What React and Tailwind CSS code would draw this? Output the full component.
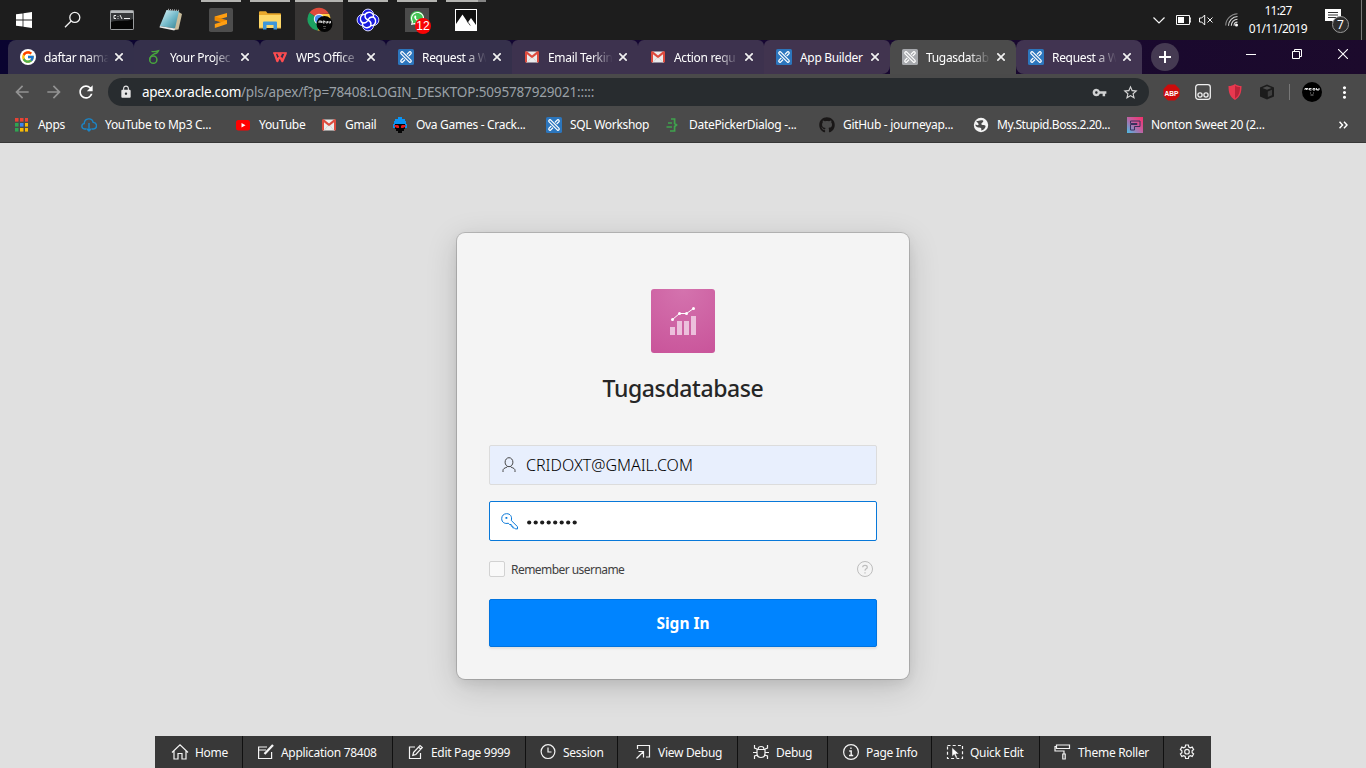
import React from "react";
import { FcGoogle } from "react-icons/fc";
import { FaGithub, FaWhatsapp } from "react-icons/fa";
import {
  MdArrowBack, MdArrowForward, MdRefresh, MdLock, MdStarBorder, MdMoreVert, MdVpnKey,
} from "react-icons/md";

/* ---------- small icons ---------- */

const Apex = ({ gray }) => (
  <svg width="16" height="16" viewBox="0 0 16 16" fill="none">
    <rect width="16" height="16" rx="1.6" fill={gray ? "#a7a9ad" : "#2c76bd"} />
    <path d="M4.6 2.9 13.1 11.4M2.9 4.6 11.4 13.1M4.6 2.9C3.4 2.4 2.4 3.4 2.9 4.6M13.1 11.4c.5 1.2-.5 2.2-1.7 1.7M11.4 2.9 9.3 5M13.1 4.6 11 6.7M11.4 2.9c1.2-.5 2.2.5 1.7 1.7M2.9 11.4 5 9.3M4.6 13.1 6.7 11M2.9 11.4c-.5 1.2.5 2.2 1.7 1.7" stroke="#fff" strokeWidth="1.25" strokeLinecap="round" />
  </svg>
);

const Gmail = () => (
  <svg width="16" height="16" viewBox="0 0 16 16">
    <path d="M2 2.500h12v11H2z" fill="#ececec" />
    <path d="M1 3.300C1 2.600 1.500 2.300 2 2.300h.8L8 6.600l5.200-4.300h.8c.6 0 1 .3 1 1v9.400c0 .5-.3.8-.8.8H13V5.200L8 9.300 3 5.200v8.300H1.800c-.5 0-.8-.3-.8-.8z" fill="#dd4b3e" />
    <path d="m3 13.500 4-4.800M13 13.500 9 8.700" stroke="#cfcfcf" strokeWidth=".7" />
  </svg>
);

const Overleaf = () => (
  <svg width="16" height="16" viewBox="0 0 16 16" fill="none" stroke="#49a63e" strokeWidth="1.500">
    <circle cx="7.300" cy="10.700" r="3.600" />
    <path d="M3.700 10.700C3.700 7.500 5.500 6 8.500 4.800M5.500 2.300c2 .6 4 .4 7-.6-.8 2.200-2.200 2.800-4.600 3.200" strokeWidth="1.300" />
  </svg>
);

const Wps = () => (
  <svg width="16" height="16" viewBox="0 0 16 16" fill="none" stroke="#ff4d50" strokeWidth="2.200">
    <path d="M1.200 4h13.600" strokeWidth="1.600" />
    <path d="m2.500 4.200 2.800 8L9 4.500M6.300 4.200l4 8 3.500-8" strokeLinejoin="round" />
  </svg>
);

const Plus = () => (
  <svg width="14" height="14" viewBox="0 0 14 14" stroke="#fff" strokeWidth="2"><path d="M7 1v12M1 7h12" /></svg>
);

const Cross = () => (
  <svg width="8" height="8" viewBox="0 0 8 8" stroke="#f1f1f1" strokeWidth="1.700"><path d="m.3.3 7.400 7.400M7.700.3.300 7.700" /></svg>
);

/* ---------- taskbar ---------- */

const WinLogo = () => (
  <svg width="16" height="16" viewBox="0 0 16 16" fill="#fff">
    <path d="M0 2.300 6.600 1.400v6.200H0zM7.400 1.300 16 0v7.600H7.400zM0 8.400h6.600v6.200L0 13.700zM7.400 8.400H16V16l-8.600-1.200z" />
  </svg>
);
const Search = () => (
  <svg width="18" height="18" viewBox="0 0 18 18" fill="none" stroke="#f2f2f2" strokeWidth="1.300">
    <circle cx="10.800" cy="6.400" r="5" /><path d="m7.200 10-6.200 6.300" />
  </svg>
);
const Cmd = () => (
  <svg width="24" height="20" viewBox="0 0 24 20">
    <rect x=".5" y=".5" width="23" height="19" rx=".6" fill="#060606" stroke="#9a9d9f" />
    <path d="M1 1h22v2H1z" fill="#b9bcbe" />
    <path d="M1 3h22v6C16 12 8 9.500 1 12z" fill="#36383a" />
    <path d="M6 5.500H4v3h2M8 6v.8M8 8v.8M10 5l2 4M14 8.500h6" stroke="#eee" strokeWidth="1" fill="none" />
  </svg>
);
const Notepad = () => (
  <svg width="24" height="24" viewBox="0 0 24 24">
    <defs><linearGradient id="np" x1="0" y1="0" x2="1" y2="1"><stop stopColor="#e4f7fb" /><stop offset=".55" stopColor="#72b9c9" /><stop offset="1" stopColor="#35808f" /></linearGradient></defs>
    <path d="m18 3 5 3-3.500 15.500L15 22z" fill="#c9bd9c" />
    <path d="M7.500 2 20 3l-4 17.500L.8 18z" fill="url(#np)" />
    <path d="m.8 18 15.200 2.500-.6 2L.6 19.500z" fill="#e8ecec" />
    <path d="M9 1.500 21 2.700" stroke="#aaa" strokeDasharray="1 1" strokeWidth="1.500" />
  </svg>
);
const Sublime = () => (
  <svg width="24" height="24" viewBox="0 0 24 24">
    <rect width="24" height="24" rx="1.800" fill="#4d4d4d" />
    <path d="M5.800 8.600 18 4.900v4L5.800 12.600z" fill="#ff9f12" />
    <path d="m5.800 8.600 12.200 3.700v3.800L5.800 12.500z" fill="#f08a00" />
    <path d="M5.800 16.100 18 12.300v3.800L5.800 20z" fill="#ff9f12" />
  </svg>
);
const Explorer = () => (
  <svg width="22" height="19" viewBox="0 0 22 19">
    <path d="M0 1.200Q0 .2 1 .2h6l1.500 2H21q1 0 1 1V17H0z" fill="#e9a92c" />
    <path d="M0 4h22v13H0z" fill="#fdd868" />
    <path d="M4 18.500v-7q0-1 1-1h12q1 0 1 1v7h-3.500V14h-7v4.500z" fill="#3e97d9" />
    <path d="M0 16.500h4v1H0zM18 16.500h4v1h-4z" fill="#e3b045" />
  </svg>
);
const Chrome = () => (
  <svg width="26" height="26" viewBox="0 0 26 26">
    <path d="M12 12 2.400 5.700A11.500 11.500 0 0 1 22 6.800L12 7z" fill="#de4b3c" />
    <path d="M12 12 2.400 5.700A11.500 11.500 0 0 0 10.500 23.500L15 15z" fill="#1ca261" />
    <path d="M12 7h10.200A11.500 11.500 0 0 1 10.500 23.500l5-9z" fill="#fecd42" />
    <circle cx="12" cy="12" r="5.200" fill="#f1f1f1" /><circle cx="12" cy="12" r="4.100" fill="#4a8bf4" />
    <circle cx="17.500" cy="17" r="8" fill="#050505" />
    <path d="M12 16v-2h2.500v2M13.200 14v2M16 15h1.500v-1H16v2h1.500M19 14v2h1.500v-2M22 14v2h1.500v-2" stroke="#ddd" strokeWidth=".9" fill="none" />
    <path d="M16 19.500h3M16.500 21.500h2" stroke="#666" strokeWidth=".8" />
  </svg>
);
const Knot = () => (
  <svg width="24" height="24" viewBox="0 0 24 24">
    <g fill="#1a1be0" stroke="#d9dcff" strokeWidth="1">
      <circle cx="12" cy="6.700" r="5.600" /><circle cx="17.300" cy="12" r="5.600" /><circle cx="12" cy="17.300" r="5.600" /><circle cx="6.700" cy="12" r="5.600" />
    </g>
    <circle cx="12" cy="12" r="7.500" fill="#1a1be0" />
    <path d="M12 12C8 10 8 5.500 12 4.500s6 2.500 5.500 4.500M12 12c2-4 6.500-4 7.500 0s-2.500 6-4.500 5.500M12 12c4 2 4 6.500 0 7.500S6 17 6.500 15M12 12c-2 4-6.500 4-7.500 0S7 6 9 6.500" fill="none" stroke="#fff" strokeWidth="1.400" />
  </svg>
);
const Photo = () => (
  <svg width="22" height="22" viewBox="0 0 22 22">
    <rect x=".5" y=".5" width="21" height="21" fill="#101010" stroke="#fff" />
    <path d="M1 15 7.500 5.500l5.300 8L16 9l5 7v5H1z" fill="#fff" />
    <path d="m12 12 3.300 4.500" stroke="#222" strokeWidth=".8" />
  </svg>
);
const WhatsApp = () => (
  <div className="relative flex size-6 items-center justify-center bg-[#4b4b4b]">
    <div className="mb-1 flex size-[14px] items-center justify-center rounded-full bg-[#43c553]">
      <FaWhatsapp className="size-[15px] shrink-0 text-white" />
    </div>
    <span className="absolute left-[10px] top-[10px] flex size-4 items-center justify-center rounded-full bg-[#f80404] font-['Liberation_Sans'] text-[12px] leading-none text-white">12</span>
  </div>
);

const slots = [
  { icon: <WinLogo /> }, { icon: <Search /> }, { icon: <Cmd /> }, { icon: <Notepad /> },
  { icon: <Sublime />, bar: "w-10 mr-1" }, { icon: <Explorer />, bar: "w-10 mr-1" },
  { icon: <Chrome />, bar: "w-12", active: true },
  { icon: <Knot />, bar: "w-10 mr-1" }, { icon: <WhatsApp />, bar: "w-10 mr-1" },
  { icon: <Photo />, bar: "w-10 mr-1 border-r-8 border-[#858585]" },
];

function Taskbar() {
  return (
    <div className="flex h-10 bg-[#1d1d1d]">
      {slots.map((s, i) => (
        <div key={i} className="flex h-10 w-[49px] flex-col items-end">
          <div className={`h-0.5 shrink-0 ${s.bar ? `bg-[#b4b4b1] ${s.bar}` : "w-10"}`} />
          <div className={`flex h-[38px] w-12 items-center justify-center pb-0.5 ${s.active ? "bg-[#373534] pl-[2px]" : i < 4 ? "pr-[2px]" : ""}`}>{s.icon}</div>
        </div>
      ))}
      <div className="ml-auto flex items-center text-white">
        <svg width="12" height="7" viewBox="0 0 12 7" fill="none" stroke="#f5f5f5" strokeWidth="1.200"><path d="m.5.5 5.500 5.500 5.500-5.500" /></svg>
        <svg className="ml-[11px]" width="15" height="10" viewBox="0 0 15 10"><path d="M.5.5h13v9H.5zM14 3h1v4h-1z" fill="none" stroke="#f5f5f5" /><path d="M2 2h6v6H2z" fill="#fff" /></svg>
        <svg className="ml-2" width="14" height="12" viewBox="0 0 14 12" fill="none" stroke="#f5f5f5"><path d="M.5 4v4h2.200l3 3V1l-3 3zM8.500 3.500l5 5M13.500 3.500l-5 5" /></svg>
        <svg className="ml-3" width="14" height="14" viewBox="0 0 14 14" fill="none" stroke="#d5d5d5" strokeWidth="1.100">
          <path d="M.7 12.500C.7 6 6 1 12.500.7" stroke="#8a8a8a" /><path d="M3.500 12.800c0-5 4-9.300 9-9.300M6.300 12.800c0-3.500 2.700-6.500 6.200-6.500M9 12.800c0-2 1.500-3.700 3.500-3.700" /><circle cx="11.500" cy="12" r="1.500" fill="#fff" stroke="none" />
        </svg>
        <div className="ml-2 flex w-[62px] flex-col items-center text-[12px] leading-[18px]">
          <span className="tracking-[-0.700px]">11:27</span>
          <span className="tracking-[-0.550px]">01/11/2019</span>
        </div>
        <div className="relative ml-4 h-[22px] w-6">
          <svg width="16" height="16" viewBox="0 0 16 16"><path d="M0 0h16v12h-5v4l-4-4H0z" fill="#fff" /><path d="M3 3.500h10M3 6h10M3 8.500h8" stroke="#333" /></svg>
          <span className="absolute left-[7px] top-[7px] flex size-[17px] items-center justify-center rounded-full border border-[#999] bg-[#2d2d2d] text-[12px] leading-none">7</span>
        </div>
        <div className="ml-[12px] mr-1 h-10 w-px bg-[#777]" />
      </div>
    </div>
  );
}

/* ---------- browser ---------- */

const tabs = [
  { icon: <FcGoogle className="size-4 rounded-full bg-white p-px" />, label: "daftar nama" },
  { icon: <Overleaf />, label: "Your Projec" },
  { icon: <Wps />, label: "WPS Office" },
  { icon: <Apex />, label: "Request a W" },
  { icon: <Gmail />, label: "Email Terkin" },
  { icon: <Gmail />, label: "Action requ" },
  { icon: <Apex />, label: "App Builder" },
  { icon: <Apex gray />, label: "Tugasdatab", active: true },
  { icon: <Apex />, label: "Request a W" },
];

function TabStrip() {
  return (
    <div className="flex h-[34px] bg-linear-to-r from-[#0a0430] via-[#150632] to-[#1c0a2c] pl-2">
      {tabs.map((t, i) => (
        <div
          key={i}
          className={`relative flex h-[34px] w-[126px] items-center pl-3 ${
            t.active ? "rounded-t-lg bg-[#4b4b4b]"
              : i === 0 ? "rounded-t-lg bg-[#34304b]"
              : i < 4 ? "rounded-t-md bg-[#35304b]"
              : i === 6 ? "rounded-t-md rounded-br-lg bg-[#41344f]"
              : i === 8 ? "rounded-t-lg rounded-bl-lg bg-[#413451]"
              : "rounded-t-md bg-[#3d324e]"
          }`}
        >
          {t.icon}
          <span className={`ml-2 w-[66px] overflow-hidden whitespace-nowrap pt-px text-[12px] tracking-[-0.320px] text-white ${i === 6 ? "" : "mask-r-from-65% mask-r-to-98%"}`}>{t.label}</span>
          <span className="ml-[5px]"><Cross /></span>
          {i < 6 && <span className="absolute right-[-1px] top-[7px] h-5 w-px bg-[#8b8699]" />}
        </div>
      ))}
      <div className="ml-[9px] mt-[3px] flex size-7 items-center justify-center rounded-full bg-[#453a52]"><Plus /></div>
      <div className="ml-auto mr-[18px] mt-2 flex h-3 items-center gap-[36px]">
        <svg width="10" height="10" viewBox="0 0 10 10" stroke="#fff"><path d="M0 5.500h10" /></svg>
        <svg width="10" height="10" viewBox="0 0 10 10" fill="none" stroke="#fff"><path d="M.5 2.500h7v7h-7zM2.500 2V.5h7v7H8" /></svg>
        <svg width="10" height="10" viewBox="0 0 10 10" stroke="#fff" strokeWidth="1.100"><path d="m0 0 10 10M10 0 0 10" /></svg>
      </div>
    </div>
  );
}

function AddressBar() {
  return (
    <div className="flex h-9 items-center pl-3">
      <MdArrowBack className="size-5 text-[#929292]" />
      <MdArrowForward className="ml-3 size-5 text-[#929292]" />
      <MdRefresh className="ml-[12px] size-5 text-white" />
      <div className="ml-[12px] flex h-7 w-[1041px] items-center rounded-full bg-[#282c2f] pl-[11px] pr-[10px]">
        <MdLock className="size-[14px] text-[#e6e6e6]" />
        <span className="ml-[9px] whitespace-nowrap pt-px text-[13.500px] tracking-[-0.160px] text-[#9aa0a6]"><span className="tracking-[-0.300px] text-white">apex.oracle.com</span>/pls/apex/f?p=78408:LOGIN_DESKTOP:5095787929021:::::</span>
        <MdVpnKey className="ml-auto size-[15px] text-[#d0d1d2]" />
        <MdStarBorder className="ml-[15px] size-[17px] text-[#d5d5d5]" />
      </div>
      <svg className="ml-[14px] overflow-visible" width="17" height="17" viewBox="0 0 17 17">
        <path d="M5 .5h7L16.500 5v7L12 16.500H5L.5 12V5z" fill="#cd0b0b" />
        <text x="8.500" y="11.500" fill="#fff" fontFamily="Liberation Sans" fontWeight="bold" fontSize="8" textAnchor="middle" textLength="14" lengthAdjust="spacingAndGlyphs">ABP</text>
      </svg>
      <svg className="ml-[15px]" width="16" height="16" viewBox="0 0 16 16" fill="none" stroke="#eee" strokeWidth="1.300">
        <rect x=".7" y=".7" width="14.600" height="14.600" rx="2.500" /><circle cx="5" cy="11" r="2.100" /><circle cx="11" cy="11" r="2.100" />
      </svg>
      <svg className="ml-[17px]" width="14" height="16" viewBox="0 0 14 16">
        <path d="M7 0c2 1.500 4 2 6.500 2 0 7-1.500 11-6.500 14C2 13 .5 9 .5 2 3 2 5 1.500 7 0z" fill="#e8384f" /><path d="M7 1.500c1.500 1 3 1.500 5 1.600-.1 5.500-1.300 9-5 11.400z" fill="#b92338" />
      </svg>
      <svg className="ml-[17px]" width="16" height="16" viewBox="0 0 16 16">
        <path d="m8 .5 7 3v9l-7 3-7-3v-9z" fill="#1c1c1c" /><path d="M8 2.200 12.500 4 8 5.800 3.500 4z" fill="#4c4c4c" /><path d="M8.800 7.500 13 5.800v5.400l-4.200 1.900z" fill="#3f3f3f" />
      </svg>
      <div className="ml-[14px] h-4 w-px bg-[#777]" />
      <div className="ml-3 flex size-5 flex-col items-center rounded-full bg-black pt-[4px]">
        <svg width="16" height="10" viewBox="0 0 16 10" fill="none" stroke="#ddd" strokeWidth="1"><path d="M1 4V2.500h3V4M2.500 2.500V4M5.500 2.500h2M5.500 4h2M5.500 2v2M9 2.500h2V4H9zM12.500 2v2H15V2M13.700 3v1" /><path d="M6 7h1M9 7h1M6.500 9h3" stroke="#888" /></svg>
      </div>
      <MdMoreVert className="ml-[13px] size-[19px] text-white" />
    </div>
  );
}

const AppsGrid = () => (
  <svg width="14" height="14" viewBox="0 0 14 14">
    {["#e94335", "#e94335", "#e94335", "#2fa552", "#3e86f3", "#f9bb06", "#2fa552", "#f9bb06", "#f9bb06"].map((c, i) => (
      <rect key={i} x={1 + (i % 3) * 5} y={Math.floor(i / 3) * 5} width="3.500" height="3.600" fill={c} />
    ))}
  </svg>
);
const CloudDown = () => (
  <svg width="16" height="16" viewBox="0 0 16 16" fill="none" stroke="#1b86c8" strokeWidth="1.400">
    <path d="M5 12H3.600C-.1 11.500.1 7 3.200 6.600 3.500.8 11 .2 12.200 5.400c4.400.4 4.400 6.200.4 6.600H11M8 6v8M5.500 11.500 8 14l2.500-2.500" />
  </svg>
);
const YouTube = () => (
  <svg width="16" height="16" viewBox="0 0 16 16"><rect x="1" y="3" width="14" height="10.500" rx="2.500" fill="#f00" /><path d="m6.500 6 4 2.200-4 2.200z" fill="#fff" /></svg>
);
const Ova = () => (
  <svg width="16" height="16" viewBox="0 0 16 16"><path d="M2 4h1V2h3V0h4v2h3v2h1v3h1v4h-2V8H3v3H1V7h1z" fill="#0a94f4" /><path d="M3 7h10v5h-1v2h-2v2H6v-2H4v-2H3z" fill="#050505" /><path d="M2 8h4l1 1v2H5L3 10zM14 8h-4L9 9v2h2l2-1z" fill="#e11b1b" /></svg>
);
const Bracket = () => (
  <svg width="16" height="16" viewBox="0 0 16 16" fill="none" stroke="#3fa34d" strokeWidth="1.700"><path d="M6 2h3.600v4.500L11.500 8l-1.900 1.500V14H5M3 6h4M1.500 10H7" /></svg>
);
const Globe = () => (
  <svg width="16" height="16" viewBox="0 0 16 16"><circle cx="8" cy="8" r="7.200" fill="#f4f4f4" /><path d="M3 3.500C5 5 8.500 2.500 10 3.500S7.500 6.500 8.500 7.500s3.500 0 4 1.500-2 4.500-4.500 4.500c1-2 0-3-2-3S2 9 2.500 7.500c2 1 3.500 1 3-.5S4 5.500 3 3.500z" fill="#4a4a4a" /></svg>
);
const PinkP = () => (
  <svg width="16" height="16" viewBox="0 0 16 16">
    <defs><linearGradient id="pp" x1="0" y1="1" x2="1" y2="0"><stop stopColor="#48bde4" /><stop offset=".55" stopColor="#c75b9d" /><stop offset="1" stopColor="#f72e68" /></linearGradient></defs>
    <rect width="16" height="16" fill="url(#pp)" /><path d="M3.500 4h9.500v5.500H7.500V13h-4V7.500H10V6.500H3.500z" fill="none" stroke="#38315c" />
  </svg>
);

const bookmarks = [
  [<AppsGrid />, "Apps", "w-[67px]"],
  [<CloudDown />, "YouTube to Mp3 C...", "w-[154px]"],
  [<YouTube />, "YouTube", "w-[86px]"],
  [<Gmail />, "Gmail", "w-[71px]"],
  [<Ova />, "Ova Games - Crack...", "w-[154px]"],
  [<Apex />, "SQL Workshop", "w-[119px]"],
  [<Bracket />, "DatePickerDialog -...", "w-[154px]"],
  [<FaGithub className="size-4 text-[#191717]" />, "GitHub - journeyap...", "w-[154px]"],
  [<Globe />, "My.Stupid.Boss.2.20...", "w-[154px] tracking-[-0.430px]"],
  [<PinkP />, "Nonton Sweet 20 (2...", "w-[154px]"],
];

function Bookmarks() {
  return (
    <div className="flex h-8 items-center border-b border-[#373737] pb-1 pl-[14px] text-[12px] tracking-[-0.300px] text-white">
      {bookmarks.map(([icon, label, cls], i) => (
        <div key={i} className={`flex shrink-0 items-center whitespace-nowrap ${cls}`}>
          <span className="flex w-4 shrink-0 items-center">{icon}</span>
          <span className="ml-2">{label}</span>
        </div>
      ))}
      <svg className="ml-[58px]" width="9" height="8" viewBox="0 0 9 8" fill="none" stroke="#fff" strokeWidth="1.500"><path d="m.5.8 3 3.200-3 3.200M5 .8 8 4 5 7.200" /></svg>
    </div>
  );
}

/* ---------- login page ---------- */

function Login() {
  return (
    <div className="flex h-[446px] w-[452px] flex-col items-center rounded-lg bg-[#f4f4f4] px-8 pt-14 shadow-[0_0_0_1px_rgba(0,0,0,0.16),0_8px_32px_rgba(0,0,0,0.16),0_4px_12px_rgba(0,0,0,0.07)]">
      <div className="flex size-16 items-center justify-center rounded-[3px] bg-[radial-gradient(circle_at_50%_0%,#d473ae,#c9549a)]">
        <svg width="32" height="32" viewBox="0 0 32 32" fill="none">
          <path d="M3 22h5v8H3zM10 16h5v14h-5zM17 16h5v14h-5zM24 11h5v19h-5z" fill="#ecc0dc" />
          <path d="m5.500 14.500 7-6h7l7-5" stroke="#fff" />
          <g fill="#fff"><circle cx="5.500" cy="14.500" r="1.500" /><circle cx="12.500" cy="8.500" r="1.500" /><circle cx="19.500" cy="8.500" r="1.500" /><circle cx="26.500" cy="3.500" r="1.500" /></g>
        </svg>
      </div>
      <h1 className="mt-[19px] h-[33px] whitespace-nowrap text-[23px] font-medium leading-8 tracking-[-0.400px] text-[#262626]">Tugasdatabase</h1>
      <div className="mt-[40px] flex h-10 w-full items-center rounded-xs border border-[#dcdcdc] bg-[#e8effd] pl-3">
        <svg width="14" height="16" viewBox="0 0 14 16" fill="none" stroke="#444" strokeWidth="1"><ellipse cx="7" cy="5.200" rx="3.900" ry="4.500" /><path d="M1 15v-1.500c0-1.800 1.500-2.500 3.800-3.200l.7-1M13 15v-1.500c0-1.800-1.500-2.500-3.800-3.200l-.7-1" /></svg>
        <span className="ml-[10px] whitespace-nowrap text-[16px] font-light text-black">CRIDOXT@GMAIL.COM</span>
      </div>
      <div className="mt-4 flex h-10 w-full items-center rounded-xs border border-[#0878d9] bg-white pl-[11px]">
        <svg width="17" height="17" viewBox="0 0 17 17" fill="none" stroke="#0878d9" strokeWidth="1"><path d="M10.300 7.500c1-4-1-6.800-4.600-6.800-3 0-5 2-5 5 0 3.500 3 5.500 6.600 4.500l1.200 1.300h1.700v1.700h1.600v1.700h1.500l1 1h2.200v-2.200z" /><path d="M4.500 4h1.800v1.800H4.500z" fill="#0878d9" stroke="none" /></svg>
        <svg className="ml-[9px] mt-[3px]" width="51" height="5" viewBox="0 0 51 5" fill="#1d1d1d">
          {[0, 1, 2, 3, 4, 5, 6, 7].map((n) => <circle key={n} cx={2.2 + n * 6.5} cy="2.500" r="2.100" />)}
        </svg>
      </div>
      <div className="mt-5 flex h-4 w-full items-center pr-1">
        <div className="size-4 rounded-xs border border-[#d2d2d2] bg-[#f9f9f9]" />
        <span className="ml-[6px] whitespace-nowrap pt-px text-[12px] leading-4 tracking-[-0.550px] text-[#404040]">Remember username</span>
        <svg className="ml-auto" width="16" height="16" viewBox="0 0 16 16" fill="none" stroke="#bdbdbd"><circle cx="8" cy="8" r="7.500" /><path d="M5.700 6.200C5.700 3.700 10.300 3.700 10.300 6.200 10.300 8 8 7.700 8 9.700M8 11.300v1.200" strokeWidth="1.200" /></svg>
      </div>
      <div className="mt-[22px] flex h-12 w-full items-center justify-center rounded-xs border border-[#0073df] bg-[#0084ff] pt-[2px] text-[15.500px] font-bold text-white shadow-[0_2px_2px_rgba(0,0,0,0.08)]">Sign In</div>
    </div>
  );
}

/* ---------- developer toolbar ---------- */

const Dev = ({ children }) => (
  <svg width="18" height="16" viewBox="0 0 18 16" fill="none" stroke="#f4f4f4" strokeWidth="1.200" className="shrink-0">{children}</svg>
);
const gear = "M7.600 1h2.800l.4 2 1.500.8 1.900-.7 1.400 2.400-1.500 1.300v1.900l1.500 1.300-1.400 2.400-1.900-.7-1.500.8-.4 2H7.600l-.4-2-1.500-.8-1.900.7L2.400 10l1.500-1.300V6.800L2.400 5.500l1.400-2.400 1.900.7L7.200 3z";
const devItems = [
  ["Home", "w-[87px] pl-4", <path d="M1 8.500 9 .9l8 7.600M3 7v8h4V9.500h4V15h4V7" />],
  ["Application 78408", "w-[149px] pl-[14px]", <><path d="M10 3H1.600v11.500h13V8M1.600 6H9" /><path d="M7.500 10 16 1" strokeWidth="2.300" /></>],
  ["Edit Page 9999", "w-[132px] pl-[14px]", <><path d="M8 3H2.500v11.500h11V9" /><path d="m6.500 8.500 6.500-7 2.300 2-6.500 7-3 .8zM11.500 3l2.300 2.100" /></>],
  ["Session", "w-[91px] pl-[13px]", <><circle cx="9" cy="7.600" r="6.900" /><path d="M9 3.500V8h3.500" /></>],
  ["View Debug", "w-[119px] pl-4", <path d="M3.500 5V1.500h12V13H12M9.500 7.500l-7 7M4.500 7.500h5v6" />],
  ["Debug", "w-[89px] pl-[14px]", <><path d="M5 5.500h8v4c0 5.300-8 5.300-8 0zM6 5.500c0-4 6-4 6 0M5 5 2.500 4V1M13 5l2.500-1V1M5 8.500H1M13 8.500h4M5.500 11l-3 1v3M12.500 11l3 1v3" /></>],
  ["Page Info", "w-[103px] pl-[14px]", <><circle cx="9" cy="8" r="7.400" /><path d="M7.200 7H9.200v4.500M7 11.500h4.200M8.300 4.300h1.300" strokeWidth="1.400" /></>],
  ["Quick Edit", "w-[107px] pl-[14px]", <><path d="M1.500 1.500h15v13h-15z" strokeDasharray="3 2.200" /><path d="M6 3.500v9l2.300-2 1.600 3.800 1.600-.8-1.600-3.600h3.100z" fill="#fff" stroke="#383838" strokeWidth=".5" /></>],
  ["Theme Roller", "w-[123px] pl-[14px]", <path d="M2.500 1h13v3.500h-13zM2.500 2.500H1V7h9v3M8.800 10h2.400v5H8.800z" />],
];

function DevToolbar() {
  return (
    <div className="flex h-8 w-[1056px] bg-[#383838] text-[12px] tracking-[-0.300px] text-[#fafafa]">
      {devItems.map(([label, cls, icon]) => (
        <React.Fragment key={label}>
          <div className={`flex shrink-0 items-center gap-[6px] whitespace-nowrap ${cls}`}><Dev>{icon}</Dev><span className="pt-px">{label}</span></div>
          <div className="w-px shrink-0 bg-[#101010]" />
        </React.Fragment>
      ))}
      <div className="flex flex-1 items-center justify-center pr-[2px]"><Dev><path d={gear} /><circle cx="9" cy="7.700" r="2.300" /></Dev></div>
    </div>
  );
}

export default function App() {
  return (
    <div className="flex h-[768px] w-[1366px] flex-col overflow-hidden bg-[#e0e0e0] font-['Noto_Sans',sans-serif] [font-stretch:86%]">
      <Taskbar />
      <TabStrip />
      <div className="h-[69px] bg-[#4a4a4a]">
        <AddressBar />
        <div className="h-[33px] pt-px"><Bookmarks /></div>
      </div>
      <div className="flex flex-1 flex-col items-center pt-[90px]">
        <Login />
        <div className="mt-auto"><DevToolbar /></div>
      </div>
    </div>
  );
}
